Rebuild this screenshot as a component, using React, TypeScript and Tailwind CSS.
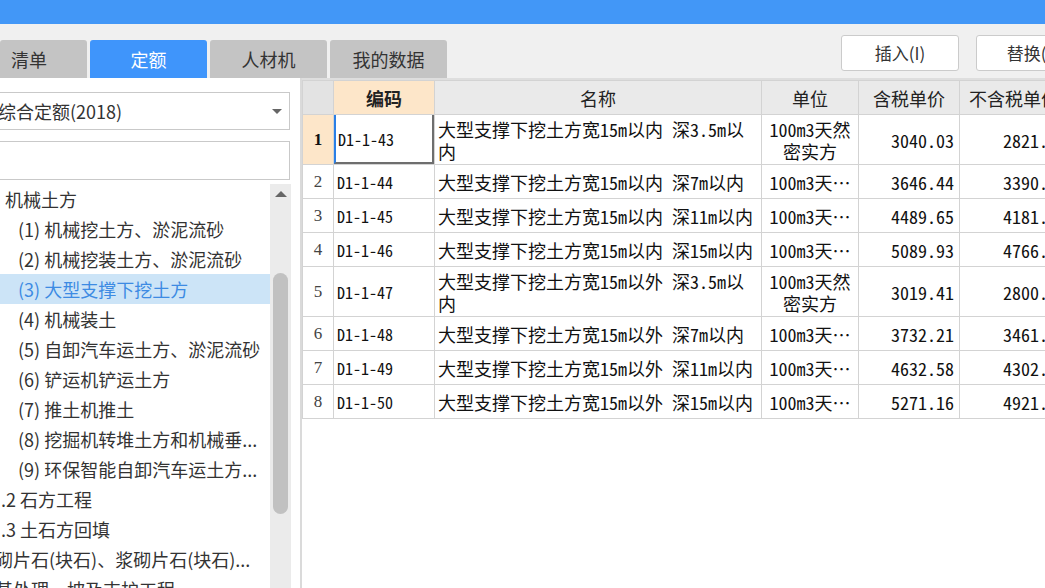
import React from "react";

const tabs = [
    { name: "清单", w: "w-[87px]", active: false },
    { name: "定额", w: "w-[117px]", active: true },
    { name: "人材机", w: "w-[117px]", active: false },
    { name: "我的数据", w: "w-[117px]", active: false },
];

const tree = [
    { text: "机械土方", pl: "pl-[5px]" },
    { text: "(1) 机械挖土方、淤泥流砂", pl: "pl-[18px]" },
    { text: "(2) 机械挖装土方、淤泥流砂", pl: "pl-[18px]" },
    { text: "(3) 大型支撑下挖土方", pl: "pl-[18px]", active: true },
    { text: "(4) 机械装土", pl: "pl-[18px]" },
    { text: "(5) 自卸汽车运土方、淤泥流砂", pl: "pl-[18px]" },
    { text: "(6) 铲运机铲运土方", pl: "pl-[18px]" },
    { text: "(7) 推土机推土", pl: "pl-[18px]" },
    { text: "(8) 挖掘机转堆土方和机械垂...", pl: "pl-[18px]" },
    { text: "(9) 环保智能自卸汽车运土方...", pl: "pl-[18px]" },
    { text: ".2 石方工程", pl: "pl-[1px]" },
    { text: ".3 土石方回填", pl: "pl-[1px]" },
    { text: "砌片石(块石)、浆砌片石(块石)...", pl: "-ml-[5px]" },
    { text: "基处理、坡及支护工程", pl: "-ml-[5px]" },
];

const rows = [
    { n: 1, code: "D1-1-43", name: ["大型支撑下挖土方宽15m以内 深3.5m以", "内"], unit: ["100m3天然", "密实方"], tax: "3040.03", notax: "2821.36", tall: true },
    { n: 2, code: "D1-1-44", name: ["大型支撑下挖土方宽15m以内 深7m以内"], unit: ["100m3天⋯"], tax: "3646.44", notax: "3390.83" },
    { n: 3, code: "D1-1-45", name: ["大型支撑下挖土方宽15m以内 深11m以内"], unit: ["100m3天⋯"], tax: "4489.65", notax: "4181.52" },
    { n: 4, code: "D1-1-46", name: ["大型支撑下挖土方宽15m以内 深15m以内"], unit: ["100m3天⋯"], tax: "5089.93", notax: "4766.41" },
    { n: 5, code: "D1-1-47", name: ["大型支撑下挖土方宽15m以外 深3.5m以", "内"], unit: ["100m3天然", "密实方"], tax: "3019.41", notax: "2800.47", tall: true },
    { n: 6, code: "D1-1-48", name: ["大型支撑下挖土方宽15m以外 深7m以内"], unit: ["100m3天⋯"], tax: "3732.21", notax: "3461.29" },
    { n: 7, code: "D1-1-49", name: ["大型支撑下挖土方宽15m以外 深11m以内"], unit: ["100m3天⋯"], tax: "4632.58", notax: "4302.65" },
    { n: 8, code: "D1-1-50", name: ["大型支撑下挖土方宽15m以外 深15m以内"], unit: ["100m3天⋯"], tax: "5271.16", notax: "4921.08" },
];

const ui = "font-['Noto_Sans_CJK_SC',sans-serif]";
const grid = "font-['Noto_Sans_Mono_CJK_SC','Liberation_Mono','Noto_Sans_CJK_SC',monospace]";

export default function App() {
    return (
        <div className={`w-[1045px] h-[588px] overflow-hidden bg-[#f0f0f0] flex flex-col text-[#333] ${ui}`}>
            <div className="h-[24px] shrink-0 bg-[#4297f7]" />

            <div className="h-[54px] shrink-0 flex items-end">
                <div className="flex gap-[3px]">
                    {tabs.map((t) => (
                        <div
                            key={t.name}
                            className={`${t.w} h-[38px] rounded-t-[3px] flex items-center text-[18px] ${t.active ? "bg-[#3f95fb] text-white justify-center" : "bg-[#c4c4c4] text-[#333] justify-center"} ${t.name === "清单" ? "!justify-start pl-[11px]" : ""}`}
                        >
                            {t.name}
                        </div>
                    ))}
                </div>
                <div className="ml-auto self-start mt-[11px] flex gap-[17px] -mr-[49px]">
                    <div className="w-[118px] h-[36px] bg-white border border-[#cbcbcb] rounded-[3px] flex items-center justify-center text-[17px]">插入(I)</div>
                    <div className="w-[118px] h-[36px] bg-white border border-[#cbcbcb] rounded-[3px] flex items-center justify-center text-[17px]">替换(R)</div>
                </div>
            </div>

            <div className="flex flex-1 min-h-0">
                {/* left panel */}
                <div className="w-[300px] shrink-0 bg-white flex flex-col overflow-hidden">
                    <div className="mt-[14px] -ml-[10px] w-[300px] h-[38px] border border-[#c9c9c9] flex items-center pl-[7px] text-[18px] relative">
                        综合定额(2018)
                        <span className="absolute right-[7px] top-[16px] w-0 h-0 border-l-[5px] border-r-[5px] border-t-[5px] border-l-transparent border-r-transparent border-t-[#666]" />
                    </div>
                    <div className="mt-[11px] -ml-[10px] w-[300px] h-[39px] border border-[#c9c9c9]" />
                    <div className="mt-[4px] flex flex-1 min-h-0">
                        <div className="w-[270px] shrink-0 overflow-hidden">
                            {tree.map((it) => (
                                <div
                                    key={it.text}
                                    className={`h-[30px] flex items-center whitespace-nowrap text-[18px] ${it.pl} ${it.active ? "bg-[#cce4f7] text-[#3d8be3]" : ""}`}
                                >
                                    {it.text}
                                </div>
                            ))}
                        </div>
                        <div className="w-[21px] shrink-0 bg-[#ebebeb] flex flex-col items-center pt-[7px]">
                            <span className="w-0 h-0 border-l-[6px] border-r-[6px] border-b-[6px] border-l-transparent border-r-transparent border-b-[#666]" />
                            <div className="mt-[76px] w-[15px] h-[241px] rounded-full bg-[#c1c1c1]" />
                        </div>
                    </div>
                </div>
                <div className="w-[2px] shrink-0 bg-[#dadada]" />

                {/* table */}
                <div className="flex-1 min-w-0 bg-white border-t-2 border-[#dedede] overflow-hidden">
                    <table className={`table-fixed border-collapse w-[769px] ${grid} text-[18px] leading-[22px] text-[#111]`}>
                        <colgroup>
                            <col className="w-[31px]" />
                            <col className="w-[101px]" />
                            <col className="w-[327px]" />
                            <col className="w-[97px]" />
                            <col className="w-[101px]" />
                            <col className="w-[112px]" />
                        </colgroup>
                        <thead>
                            <tr className={`h-[34px] ${ui} text-[18px] text-[#222]`}>
                                <th className="border border-[#d3d3d3] bg-[#e3e3e3]" />
                                <th className="border border-[#d3d3d3] bg-[#fde6c9] font-bold">编码</th>
                                <th className="border border-[#d3d3d3] bg-[#eaeaea] font-normal">名称</th>
                                <th className="border border-[#d3d3d3] bg-[#eaeaea] font-normal">单位</th>
                                <th className="border border-[#d3d3d3] bg-[#eaeaea] font-normal">含税单价</th>
                                <th className="border border-[#d3d3d3] bg-[#eaeaea] font-normal whitespace-nowrap overflow-hidden text-left pl-[9px]">不含税单价</th>
                            </tr>
                        </thead>
                        <tbody>
                            {rows.map((r) => (
                                <tr key={r.n} className={r.tall ? "h-[50px]" : "h-[34px]"}>
                                    <td className={`border border-[#d3d3d3] text-center font-['Liberation_Serif',serif] text-[17px] ${r.n === 1 ? "bg-[#fde6c9] font-bold" : "text-[#444]"}`}>{r.n}</td>
                                    <td className="border border-[#d3d3d3] p-0">
                                        {r.n === 1 ? (
                                            <div className="h-[49px] border-l-2 border-l-[#2a7fe6] border-r-2 border-b-2 border-r-[#6e6e6e] border-b-[#6e6e6e] flex items-center pl-[2px] text-[16px]">{r.code}</div>
                                        ) : (
                                            <div className="pl-[3px] text-[16px]">{r.code}</div>
                                        )}
                                    </td>
                                    <td className="border border-[#d3d3d3] pl-[3px] whitespace-nowrap overflow-hidden">
                                        {r.name.map((l) => (
                                            <div key={l}>{l}</div>
                                        ))}
                                    </td>
                                    <td className="border border-[#d3d3d3] text-center whitespace-nowrap overflow-hidden">
                                        {r.unit.map((l) => (
                                            <div key={l}>{l}</div>
                                        ))}
                                    </td>
                                    <td className="border border-[#d3d3d3] text-right pr-[5px]">{r.tax}</td>
                                    <td className="border border-[#d3d3d3] text-right pr-[5px] whitespace-nowrap overflow-hidden">{r.notax}</td>
                                </tr>
                            ))}
                        </tbody>
                    </table>
                </div>
            </div>
        </div>
    );
}
